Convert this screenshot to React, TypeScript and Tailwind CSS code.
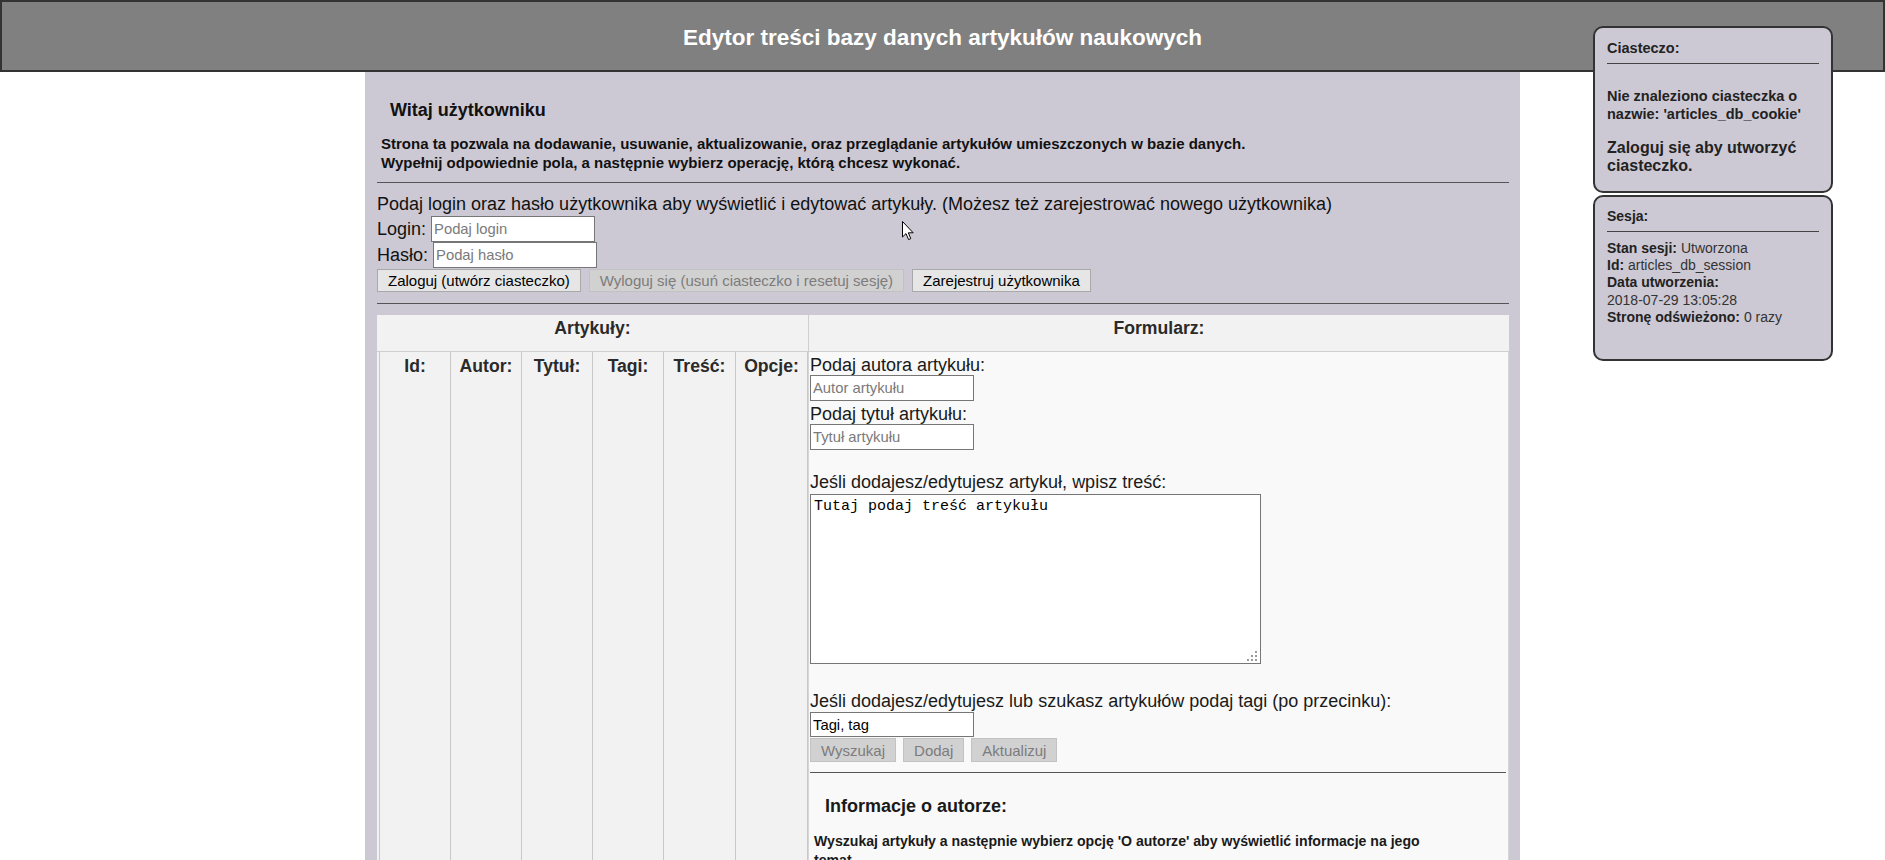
import React from "react";

const sans = { fontFamily: '"Liberation Sans", Arial, sans-serif' };

function Field({ placeholder, value, className }: { placeholder?: string; value?: string; className?: string }) {
  return (
    <input
      type="text"
      placeholder={placeholder}
      defaultValue={value}
      className={
        "block w-[164px] border border-[#767676] bg-white px-[2px] text-[14.8px] text-black outline-none placeholder:text-[#7a7a7a] " +
        (className ?? "h-[26px]")
      }
    />
  );
}

function Btn({ label, disabled, className }: { label: string; disabled?: boolean; className?: string }) {
  return (
    <button
      type="button"
      disabled={disabled}
      className={
        "border px-[10px] text-[15px] leading-none " +
        (disabled ? "border-[#c2c2c2] bg-[#d1d1d1] text-[#7c7c7c] " : "border-[#a9a9a9] bg-[#e6e6e6] text-black ") +
        (className ?? "h-[23px]")
      }
    >
      {label}
    </button>
  );
}

const columns = [
  { name: "Id:", w: "w-[71px]" },
  { name: "Autor:", w: "w-[71px]" },
  { name: "Tytuł:", w: "w-[71px]" },
  { name: "Tagi:", w: "w-[71px]" },
  { name: "Treść:", w: "w-[72px]" },
  { name: "Opcje:", w: "w-[72px]" },
];

function CursorArrow() {
  return (
    <svg className="pointer-events-none absolute left-[902px] top-[221px]" width="13" height="20" viewBox="0 0 13 20">
      <path d="M0.5 0.5 L0.5 16 L4 12.6 L6.6 18.6 L8.8 17.6 L6.3 11.8 L11.2 11.8 Z" fill="white" stroke="black" strokeWidth="1" />
    </svg>
  );
}

function SideBoxes() {
  return (
    <div className="absolute left-[1593px] top-[26px] flex w-[240px] flex-col gap-[2px] text-[#222]">
      <div className="h-[167px] rounded-[10px] border-2 border-[#333] bg-[#cdc9d4] px-[12px] pt-[12px]">
        <div className="text-[14.5px] font-bold leading-[17px]">Ciasteczo:</div>
        <div className="mt-[6px] h-px bg-[#444]" />
        <p className="mt-[24px] text-[14.5px] font-bold leading-[17.5px]">
          Nie znaleziono ciasteczka o nazwie: 'articles_db_cookie'
        </p>
        <p className="mt-[16px] text-[16px] font-bold leading-[18px]">Zaloguj się aby utworzyć ciasteczko.</p>
      </div>
      <div className="h-[166px] rounded-[10px] border-2 border-[#333] bg-[#cdc9d4] px-[12px] pt-[11px]">
        <div className="text-[14px] font-bold leading-[17px]">Sesja:</div>
        <div className="mt-[6px] h-px bg-[#444]" />
        <div className="mt-[8px] text-[14px] leading-[17.2px] text-[#333]">
          <div>
            <b className="text-[#222]">Stan sesji:</b> Utworzona
          </div>
          <div>
            <b className="text-[#222]">Id:</b> articles_db_session
          </div>
          <div>
            <b className="text-[#222]">Data utworzenia:</b>
          </div>
          <div>2018-07-29 13:05:28</div>
          <div>
            <b className="text-[#222]">Stronę odświeżono:</b> 0 razy
          </div>
        </div>
      </div>
    </div>
  );
}

export default function App() {
  return (
    <div className="relative min-h-[860px] bg-white text-[#111]" style={sans}>
      <header className="flex h-[72px] items-center justify-center border-2 border-[#333] bg-[#808080] pt-[4px]">
        <h1 className="text-[22.5px] font-bold text-white">Edytor treści bazy danych artykułów naukowych</h1>
      </header>

      <main className="mx-auto w-[1155px] bg-[#cdc9d4] pb-[40px] pl-[12px] pr-[11px] pt-[28px]">
        <h4 className="ml-[13px] text-[18px] font-bold leading-[21px]">Witaj użytkowniku</h4>
        <p className="ml-[4px] mt-[13px] text-[15px] font-bold leading-[19px]">
          Strona ta pozwala na dodawanie, usuwanie, aktualizowanie, oraz przeglądanie artykułów umieszczonych w bazie danych.
          <br />
          Wypełnij odpowiednie pola, a następnie wybierz operację, którą chcesz wykonać.
        </p>
        <div className="mt-[10px] h-px bg-[#555]" />

        <p className="mt-[11px] text-[18px] leading-[20px]">
          Podaj login oraz hasło użytkownika aby wyświetlić i edytować artykuły. (Możesz też zarejestrować nowego użytkownika)
        </p>
        <div className="mt-[2px] flex h-[26px] items-center gap-[5px] text-[18px]">
          <span>Login:</span>
          <Field placeholder="Podaj login" />
        </div>
        <div className="flex h-[26px] items-center gap-[5px] text-[18px]">
          <span>Hasło:</span>
          <Field placeholder="Podaj hasło" />
        </div>
        <div className="mt-px flex gap-[8px]">
          <Btn label="Zaloguj (utwórz ciasteczko)" />
          <Btn label="Wyloguj się (usuń ciasteczko i resetuj sesję)" disabled />
          <Btn label="Zarejestruj użytkownika" />
        </div>
        <div className="mt-[11px] h-px bg-[#555]" />

        <div className="mt-[11px] grid grid-cols-[431px_701px] text-[#2a2a2a]">
          <div className="h-[37px] border-b border-[#cfcfcf] bg-[#f2f2f2] pt-[3px] text-center text-[17.6px] font-bold leading-[20px]">
            Artykuły:
          </div>
          <div className="h-[37px] border-b border-l border-[#cfcfcf] bg-[#f2f2f2] pt-[3px] text-center text-[17.6px] font-bold leading-[20px]">
            Formularz:
          </div>

          <div className="flex bg-[#f2f2f2] pl-[2px]">
            <div className="flex border-r border-[#c8c8c8]">
              {columns.map((c) => (
                <div
                  key={c.name}
                  className={"border-l border-[#c8c8c8] pt-[4px] text-center text-[17.6px] font-bold leading-[20px] " + c.w}
                >
                  {c.name}
                </div>
              ))}
            </div>
          </div>

          <div className="border-l border-r border-[#d6d6d6] bg-[#f9f9f9] pb-[10px] pl-[1px] pr-[2px] pt-[4px] text-[18px] text-[#1a1a1a]">
            <div className="leading-[19px]">Podaj autora artykułu:</div>
            <Field placeholder="Autor artykułu" />
            <div className="mt-[4px] leading-[19px]">Podaj tytuł artykułu:</div>
            <Field placeholder="Tytuł artykułu" />
            <div className="mt-[23px] leading-[19px]">Jeśli dodajesz/edytujesz artykuł, wpisz treść:</div>
            <div className="relative mt-[2px] h-[170px] w-[451px]">
              <textarea
                defaultValue="Tutaj podaj treść artykułu"
                className="block h-full w-full resize-none border border-[#767676] bg-white px-[3px] py-[3px] text-[15px] leading-[18px] text-black outline-none"
                style={{ fontFamily: '"Liberation Mono", "Courier New", monospace' }}
              />
              <svg className="pointer-events-none absolute bottom-[2px] right-[3px]" width="11" height="11" viewBox="0 0 11 11">
                <rect x="8" y="0" width="2" height="2" fill="#9a9a9a" />
                <rect x="4" y="4" width="2" height="2" fill="#9a9a9a" />
                <rect x="8" y="4" width="2" height="2" fill="#9a9a9a" />
                <rect x="0" y="8" width="2" height="2" fill="#9a9a9a" />
                <rect x="4" y="8" width="2" height="2" fill="#9a9a9a" />
                <rect x="8" y="8" width="2" height="2" fill="#9a9a9a" />
              </svg>
            </div>
            <div className="mt-[28px] leading-[19px]">
              Jeśli dodajesz/edytujesz lub szukasz artykułów podaj tagi (po przecinku):
            </div>
            <Field value="Tagi, tag" className="mt-px h-[25px]" />
            <div className="mt-px flex gap-[7px]">
              <Btn label="Wyszukaj" disabled className="h-[24px]" />
              <Btn label="Dodaj" disabled className="h-[24px]" />
              <Btn label="Aktualizuj" disabled className="h-[24px]" />
            </div>
            <div className="mt-[10px] h-px bg-[#555]" />
            <h4 className="ml-[15px] mt-[23px] text-[18px] font-bold leading-[21px]">Informacje o autorze:</h4>
            <p className="ml-[4px] mt-[15px] max-w-[650px] text-[14.1px] font-bold leading-[19px]">
              Wyszukaj artykuły a następnie wybierz opcję 'O autorze' aby wyświetlić informacje na jego temat.
            </p>
          </div>
        </div>
      </main>

      <SideBoxes />
      <CursorArrow />
    </div>
  );
}
